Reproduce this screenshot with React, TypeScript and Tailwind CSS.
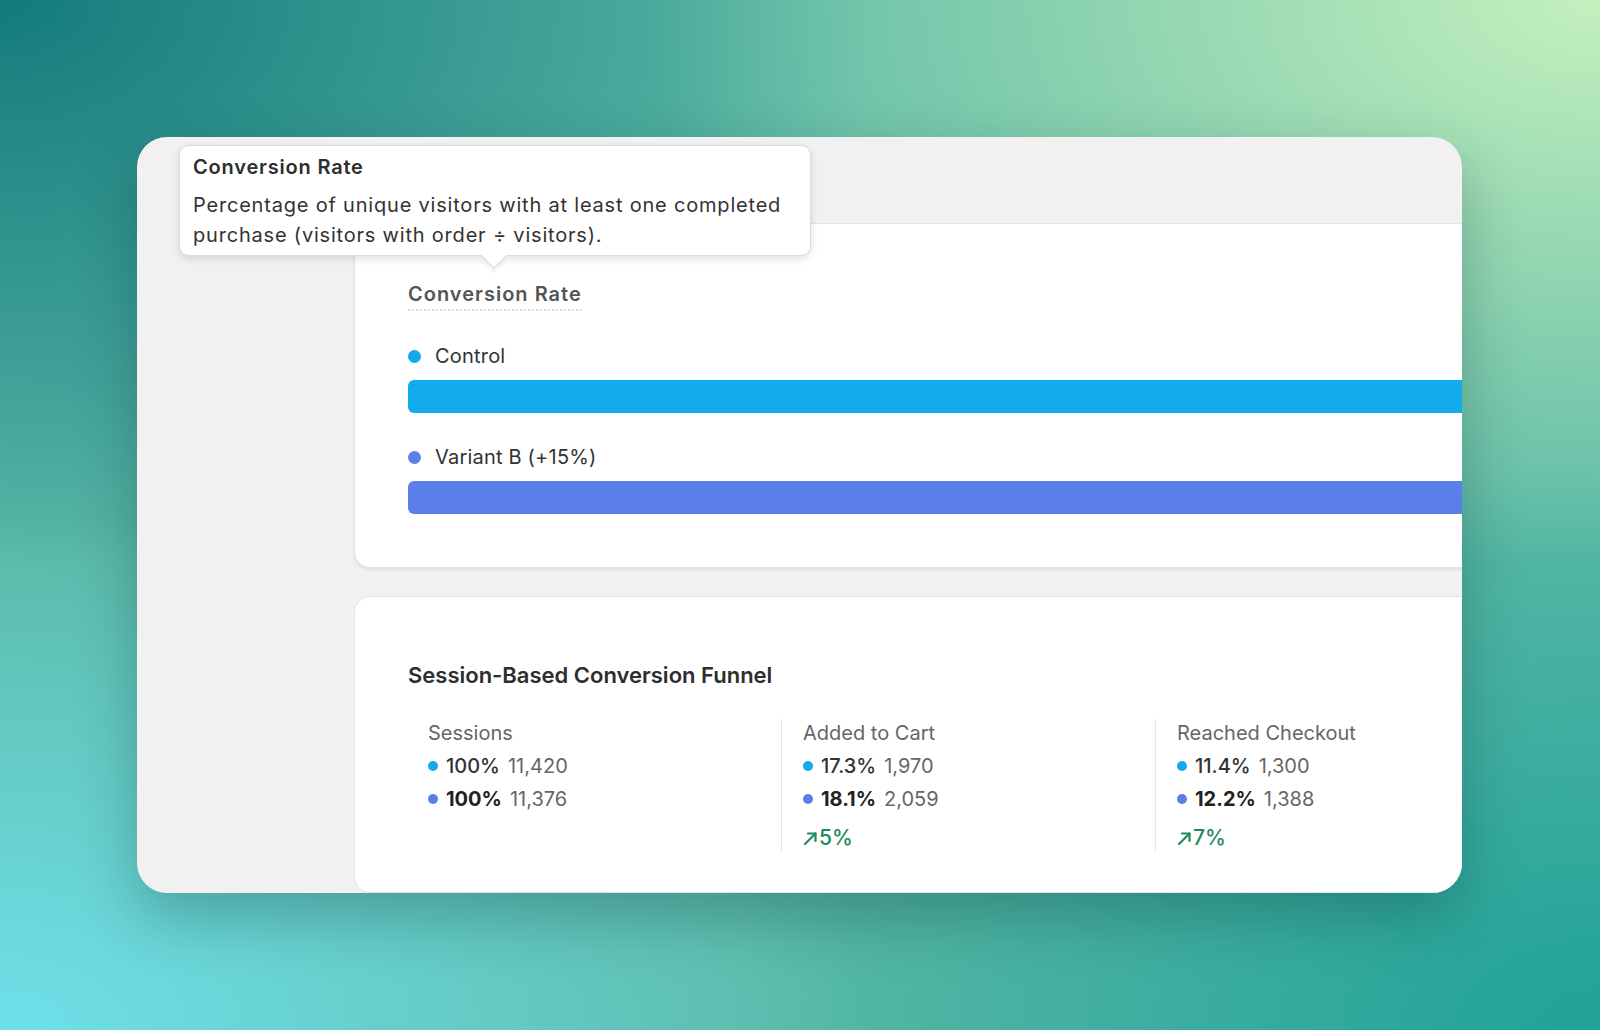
import React from "react";

const font = { fontFamily: "Inter, 'Noto Sans', 'Liberation Sans', sans-serif" };

type Row = { color: string; pct: string; count: string; bold?: boolean };

interface Step {
  label: string;
  rows: Row[];
  lift?: string;
}

const SKY = "bg-[#12aaec]";
const INDIGO = "bg-[#5b7fe9]";

const steps: Step[] = [
  {
    label: "Sessions",
    rows: [
      { color: SKY, pct: "100%", count: "11,420" },
      { color: INDIGO, pct: "100%", count: "11,376", bold: true },
    ],
  },
  {
    label: "Added to Cart",
    rows: [
      { color: SKY, pct: "17.3%", count: "1,970" },
      { color: INDIGO, pct: "18.1%", count: "2,059", bold: true },
    ],
    lift: "5%",
  },
  {
    label: "Reached Checkout",
    rows: [
      { color: SKY, pct: "11.4%", count: "1,300" },
      { color: INDIGO, pct: "12.2%", count: "1,388", bold: true },
    ],
    lift: "7%",
  },
];

function UpRight() {
  return (
    <svg width="15" height="15" viewBox="0 0 15 15" fill="none" stroke="currentColor" strokeWidth="2.2" strokeLinecap="round" strokeLinejoin="round" className="mr-[1px]">
      <path d="M2 13 L12.5 2.5" />
      <path d="M5 2.5 H12.5 V10" />
    </svg>
  );
}

function FunnelColumn({ step, first }: { step: Step; first: boolean }) {
  return (
    <div className={`flex flex-col pl-5 ${first ? "" : "border-l border-[#e6e6e6] pl-[21px]"}`}>
      <div className="text-[20px] leading-7 text-[#666]">{step.label}</div>
      {step.rows.map((r, i) => (
        <div key={i} className="mt-[5px] flex items-center gap-2 text-[20px] leading-7">
          <span className={`h-[10px] w-[10px] shrink-0 rounded-full ${r.color}`} />
          <span className={r.bold ? "font-bold text-[#222]" : "font-medium text-[#333]"}>{r.pct}</span>
          <span className="text-[#666]">{r.count}</span>
        </div>
      ))}
      {step.lift ? (
        <div className="mt-[11px] flex items-center text-[21px] font-medium leading-7 text-[#1e8a5c]">
          <UpRight />
          {step.lift}
        </div>
      ) : (
        <div className="mt-[11px] h-7" />
      )}
    </div>
  );
}

function BarRow({ dot, label, bar }: { dot: string; label: string; bar: string }) {
  return (
    <div className="flex flex-col">
      <div className="flex items-center gap-[14px] text-[20px] leading-7 tracking-[0.01em] text-[#333]">
        <span className={`h-[13px] w-[13px] rounded-full ${dot}`} />
        {label}
      </div>
      <div className={`mt-[10px] h-[33px] rounded-l-md ${bar}`} />
    </div>
  );
}

export default function App() {
  return (
    <div
      style={font}
      className="h-[1030px] w-full overflow-hidden bg-[#5bb9a6] bg-[radial-gradient(ellipse_60%_55%_at_100%_0%,#c4f0bd_0%,rgba(196,240,189,0)_100%),radial-gradient(ellipse_55%_50%_at_0%_100%,#6fe0ea_0%,rgba(111,224,234,0)_100%),radial-gradient(ellipse_55%_55%_at_0%_0%,#137a7d_0%,rgba(19,122,125,0)_100%),radial-gradient(ellipse_55%_55%_at_100%_100%,#1fa299_0%,rgba(31,162,153,0)_100%),radial-gradient(ellipse_20%_30%_at_5%_36%,#56b4a6_0%,rgba(86,180,166,0)_100%)] pl-[137px] pt-[137px]"
    >
      <div className="relative h-[756px] w-[1325px] overflow-hidden rounded-[30px] bg-[#f1f1f1] shadow-[0_24px_60px_rgba(0,40,40,0.28)]">
        <div className="flex">
          <div className="w-[217px] shrink-0" />
          <div className="flex shrink-0 flex-col gap-[28px] pt-[86px]">
            {/* metric card */}
            <div className="w-[1225px] rounded-2xl border border-[#e4e4e4] bg-white px-[53px] pb-[53px] pt-[56px] shadow-[0_2px_3px_rgba(0,0,0,0.08)]">
              <div className="inline-block border-b-2 border-dotted border-[#dadada] pb-[1px] text-[20px] font-semibold leading-7 tracking-[0.05em] text-[#555]">
                Conversion Rate
              </div>
              <div className="mt-[31px] flex flex-col gap-[30px]">
                <BarRow dot="bg-[#12aaec]" label="Control" bar="bg-[#12abed]" />
                <BarRow dot="bg-[#5b7fe9]" label="Variant B (+15%)" bar="bg-[#5b7fea]" />
              </div>
            </div>

            {/* funnel card */}
            <div className="w-[1225px] rounded-2xl border border-[#e4e4e4] bg-white px-[53px] pb-10 pt-[64px]">
              <h2 className="text-[22px] font-semibold leading-7 text-[#2e2e2e]">Session-Based Conversion Funnel</h2>
              <div className="mt-[30px] grid grid-cols-[373px_374px_373px]">
                {steps.map((s, i) => (
                  <FunnelColumn key={s.label} step={s} first={i === 0} />
                ))}
              </div>
            </div>
          </div>
        </div>

        {/* tooltip */}
        <div className="absolute left-[42px] top-[8px] w-[632px] rounded-[10px] border border-[#dcdcdc] bg-white px-[13px] pb-[5px] pt-[7px] shadow-[0_3px_8px_rgba(0,0,0,0.12)]">
          <div className="absolute bottom-[-10px] left-[305px] h-[18px] w-[18px] rotate-45 border-b border-r border-[#dcdcdc] bg-white shadow-[3px_3px_4px_rgba(0,0,0,0.06)]" />
          <div className="relative tracking-[0.05em]">
            <div className="text-[20px] font-semibold leading-7 text-[#2e2e2e]">Conversion Rate</div>
            <p className="mt-[9px] text-[20px] leading-[30px] text-[#333]">
              Percentage of unique visitors with at least one completed purchase (visitors with order ÷ visitors).
            </p>
          </div>
        </div>
      </div>
    </div>
  );
}
